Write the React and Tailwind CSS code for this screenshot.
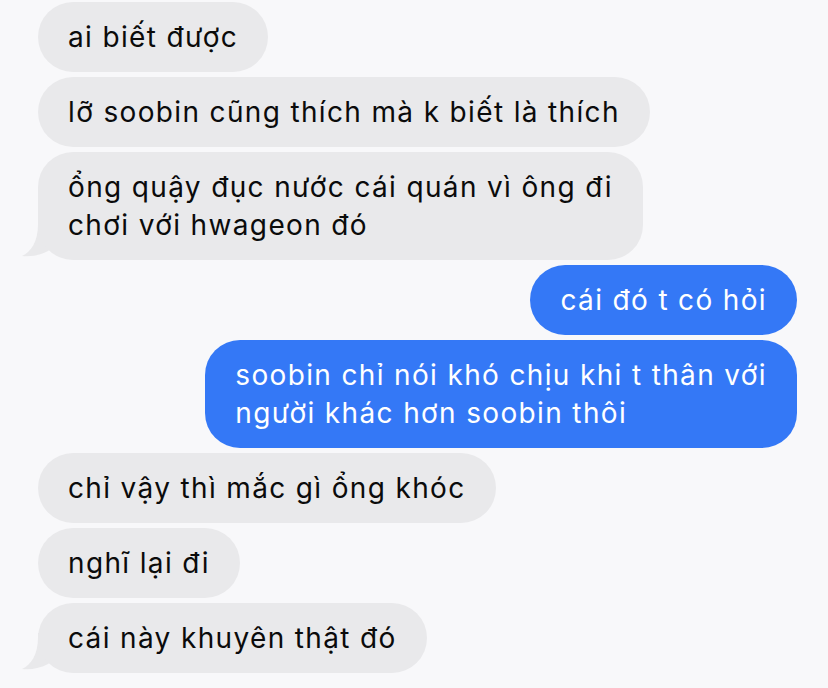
import React from "react";

const messages = [
  { from: "them", lines: ["ai biết được"] },
  { from: "them", lines: ["lỡ soobin cũng thích mà k biết là thích"] },
  { from: "them", lines: ["ổng quậy đục nước cái quán vì ông đi", "chơi với hwageon đó"], tail: true },
  { from: "me", lines: ["cái đó t có hỏi"] },
  { from: "me", lines: ["soobin chỉ nói khó chịu khi t thân với", "người khác hơn soobin thôi"] },
  { from: "them", lines: ["chỉ vậy thì mắc gì ổng khóc"] },
  { from: "them", lines: ["nghĩ lại đi"] },
  { from: "them", lines: ["cái này khuyên thật đó"], tail: true },
];

function Tail() {
  return (
    <svg
      className="absolute left-[-17px] bottom-0 w-[40px] h-[40px]"
      viewBox="0 0 40 40"
    >
      <path
        d="M17 0 L17 4 C17 22 10 32 1 36 C10 37 20 35 27 31 L40 20 L40 0 Z"
        fill="#e9e9eb"
      />
    </svg>
  );
}

function Bubble({ msg }) {
  const mine = msg.from === "me";
  return (
    <div className={mine ? "flex justify-end" : "flex justify-start"}>
      <div className="relative">
        {msg.tail && <Tail />}
        <div
          className={
            "relative rounded-[35px] pl-[30px] pr-[30px] py-[16px] text-[28px] leading-[38px] tracking-[1.35px] whitespace-nowrap " +
            (mine ? "bg-[#3478f6] text-white" : "bg-[#e9e9eb] text-[#0b0b0b]")
          }
        >
          {msg.lines.map((line, i) => (
            <div key={i}>{line}</div>
          ))}
        </div>
      </div>
    </div>
  );
}

export default function App() {
  return (
    <div
      className="w-[828px] h-[688px] overflow-hidden bg-[#f8f8fa] pt-[2px] pl-[38px] pr-[31px] flex flex-col gap-[5px]"
      style={{ fontFamily: "Inter, 'Noto Sans', sans-serif" }}
    >
      {messages.map((m, i) => (
        <Bubble key={i} msg={m} />
      ))}
    </div>
  );
}
